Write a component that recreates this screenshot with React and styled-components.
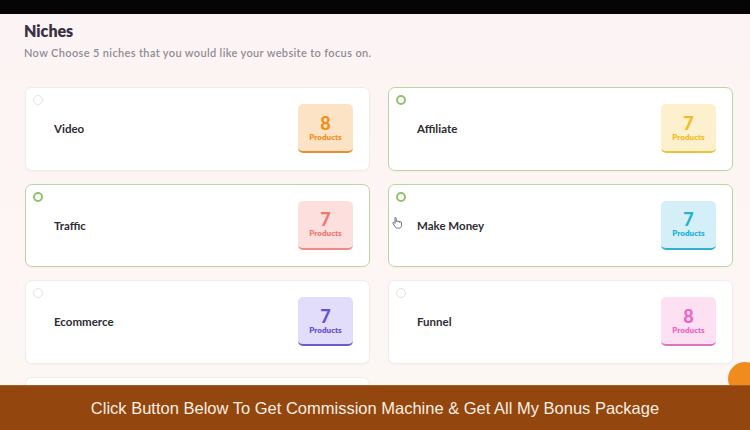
import React from "react";
import styled, { createGlobalStyle } from "styled-components";

const GlobalStyle = createGlobalStyle`
  html, body {
    margin: 0;
    padding: 0;
  }
  body {
    width: 750px;
    height: 430px;
    overflow: hidden;
    font-family: Lato, "Open Sans", sans-serif;
    background: #fdf6f5;
  }
`;

const Page = styled.div`
  position: relative;
  width: 750px;
  height: 430px;
  overflow: hidden;
  background: linear-gradient(180deg, #fcf4f4 0%, #fdf7f4 100%);
`;

const TopBar = styled.div`
  height: 14px;
  background: #050505;
`;

const Main = styled.div`
  padding: 7px 17px 0 24px;
`;

const Title = styled.h1`
  margin: 0;
  font-size: 16px;
  line-height: 20px;
  font-weight: 800;
  color: #3b3147;
`;

const Subtitle = styled.p`
  margin: 5px 0 0;
  font-size: 11px;
  line-height: 14px;
  font-weight: 600;
  color: #8f8c96;
  letter-spacing: 0.35px;
`;

const Grid = styled.div`
  margin-top: 27px;
  margin-left: 1px;
  display: grid;
  grid-template-columns: 345px 345px;
  grid-auto-rows: 83.5px;
  column-gap: 18px;
  row-gap: 13px;
`;

const Card = styled.div`
  position: relative;
  box-sizing: border-box;
  display: flex;
  align-items: center;
  justify-content: space-between;
  padding: 0 16px 0 28px;
  background: #ffffff;
  border-radius: 7px;
  border: 1px solid ${(p) => (p.$selected ? "#bcd6a2" : "#f1ecec")};
  box-shadow: 0 1px 2px rgba(120, 90, 90, 0.04);
`;

const Radio = styled.span`
  position: absolute;
  top: 7px;
  left: 7px;
  box-sizing: border-box;
  width: 10px;
  height: 10px;
  border-radius: 50%;
  border: ${(p) => (p.$selected ? "2.5px solid #8fc46d" : "1px solid #e6e2e2")};
  background: #fff;
`;

const Label = styled.span`
  font-size: 11.5px;
  font-weight: 700;
  color: #2f2c33;
`;

const Badge = styled.div`
  box-sizing: border-box;
  width: 55px;
  height: 49px;
  border-radius: 5px;
  background: ${(p) => p.$bg};
  border-bottom: 2px solid ${(p) => p.$line};
  color: ${(p) => p.$fg};
  display: flex;
  flex-direction: column;
  align-items: center;
  justify-content: center;
  padding-top: 1px;
`;

const Count = styled.span`
  font-size: 18px;
  line-height: 18px;
  font-weight: 900;
`;

const Unit = styled.span`
  font-size: 8px;
  line-height: 11px;
  font-weight: 800;
`;

const Cursor = styled.svg`
  position: absolute;
  left: 392px;
  top: 217px;
`;

const Footer = styled.div`
  position: absolute;
  left: 0;
  right: 0;
  bottom: 0;
  height: 44px;
  background: #93460d;
  border-top: 1px solid #a5602a;
  display: flex;
  align-items: center;
  justify-content: center;
  color: #fbeee3;
  font-family: "Liberation Sans Narrow", "Liberation Sans", Arial, sans-serif;
  font-size: 16.5px;
`;

const Dot = styled.div`
  position: absolute;
  right: -12px;
  bottom: 34px;
  width: 34px;
  height: 34px;
  border-radius: 50%;
  background: #f08c1d;
`;

const niches = [
  { name: "Video", count: 8, bg: "#fde3c6", fg: "#f0901c", line: "#e9902e" },
  { name: "Affiliate", count: 7, bg: "#fdf0cc", fg: "#f1bc26", line: "#eec13a", selected: true },
  { name: "Traffic", count: 7, bg: "#fde0de", fg: "#f07870", line: "#ee8b83", selected: true },
  { name: "Make Money", count: 7, bg: "#d5eff9", fg: "#26b2d4", line: "#35afd0", selected: true },
  { name: "Ecommerce", count: 7, bg: "#e1ddfa", fg: "#6653cf", line: "#6c5bcf" },
  { name: "Funnel", count: 8, bg: "#fde0f2", fg: "#ec67c6", line: "#df74c2" },
  { name: "", count: null },
];

const App = () => {
  return (
    <Page>
      <GlobalStyle />
      <TopBar />
      <Main>
        <Title>Niches</Title>
        <Subtitle>Now Choose 5 niches that you would like your website to focus on.</Subtitle>
        <Grid>
          {niches.map((n, i) => (
            <Card key={i} $selected={n.selected}>
              <Radio $selected={n.selected} />
              <Label>{n.name}</Label>
              {n.count !== null && (
                <Badge $bg={n.bg} $fg={n.fg} $line={n.line}>
                  <Count>{n.count}</Count>
                  <Unit>Products</Unit>
                </Badge>
              )}
            </Card>
          ))}
        </Grid>
      </Main>
      <Cursor width="11" height="12" viewBox="0 0 11 12">
        <path
          d="M3 1.2v5.3l-1-1c-.6-.5-1.5 0-1.1.8l2.3 3.6c.5.8 1.4 1.3 2.4 1.3h1.2c1.5 0 2.7-1.2 2.7-2.7V5.6c0-.5-.4-.9-.9-.9s-.9.4-.9.9V5c0-.5-.4-.9-.9-.9s-.9.4-.9.9v-.3c0-.5-.4-.9-.9-.9s-.8.3-.8.8V1.2c0-.5-.4-.9-.9-.9S3 .7 3 1.2z"
          fill="#fff"
          stroke="#555"
          strokeWidth="0.8"
        />
      </Cursor>
      <Dot />
      <Footer>Click Button Below To Get Commission Machine &amp; Get All My Bonus Package</Footer>
    </Page>
  );
};

export default App;
